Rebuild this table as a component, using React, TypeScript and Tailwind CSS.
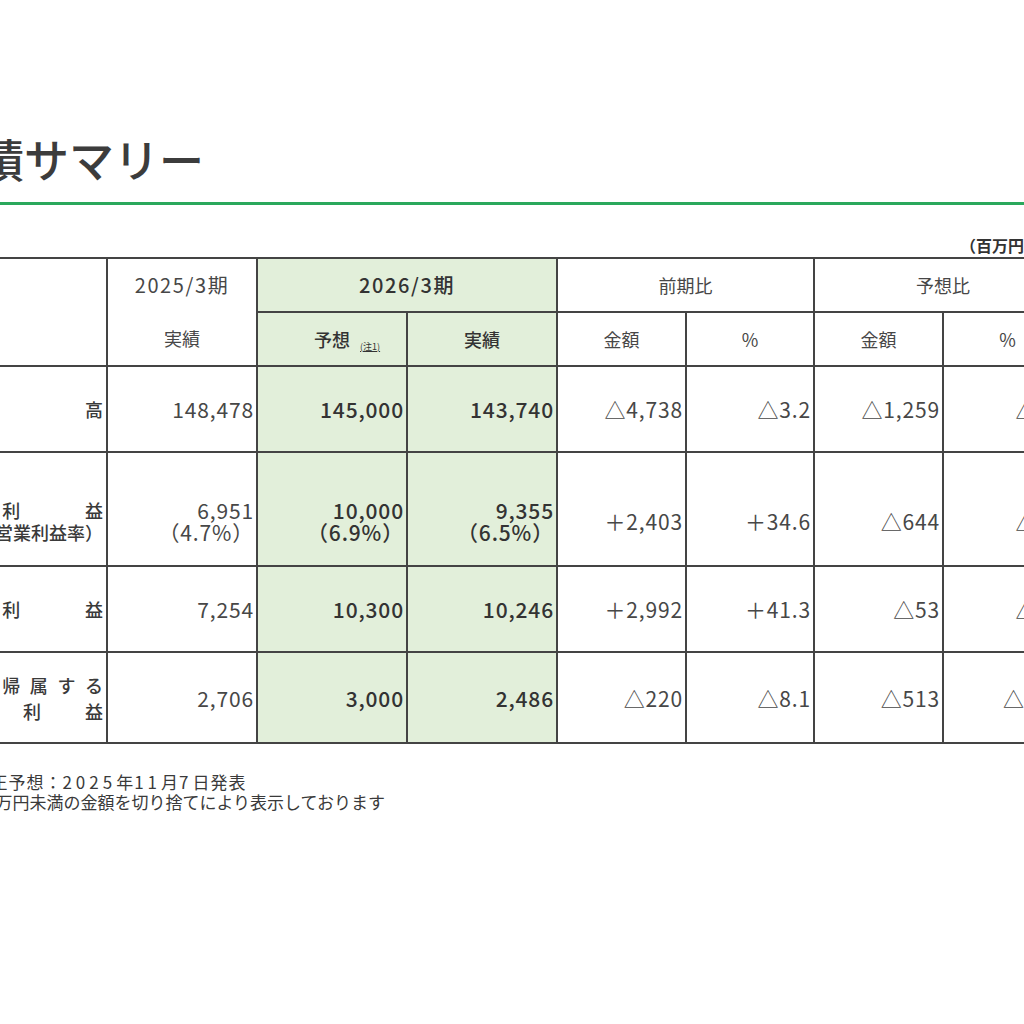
import React from 'react';

type Row = {
  label: React.ReactNode;
  values: string[][];
  height: string;
  pad?: string;
  leading: string;
};

const Spread = ({ text }: { text: string }) => (
  <div className="flex justify-between">
    {[...text].map((c, i) => (
      <span key={i}>{c}</span>
    ))}
  </div>
);

const rows: Row[] = [
  {
    label: <Spread text="売上高" />,
    values: [['148,478'], ['145,000'], ['143,740'], ['△4,738'], ['△3.2'], ['△1,259'], ['△0.9']],
    height: 'h-[86px]',
    leading: 'leading-[21px]',
  },
  {
    label: (
      <>
        <Spread text="営業利益" />
        <div className="text-right">（営業利益率）</div>
      </>
    ),
    values: [
      ['6,951', '（4.7%）'],
      ['10,000', '（6.9%）'],
      ['9,355', '（6.5%）'],
      ['＋2,403'],
      ['＋34.6'],
      ['△644'],
      ['△6.4'],
    ],
    height: 'h-[114px]',
    pad: 'pt-[24px]',
    leading: 'leading-[22px]',
  },
  {
    label: <Spread text="経常利益" />,
    values: [['7,254'], ['10,300'], ['10,246'], ['＋2,992'], ['＋41.3'], ['△53'], ['△0.5']],
    height: 'h-[86px]',
    leading: 'leading-[21px]',
  },
  {
    label: (
      <>
        <Spread text="親会社株主に帰属する" />
        <Spread text="当期純利益" />
      </>
    ),
    values: [['2,706'], ['3,000'], ['2,486'], ['△220'], ['△8.1'], ['△513'], ['△17.1']],
    height: 'h-[91px]',
    leading: 'leading-[26px]',
  },
];

const cell = 'border-2 border-[#444]';

export default function App() {
  return (
    <div className="w-[1024px] h-[1024px] overflow-hidden bg-white text-[#474747] font-['Noto_Sans_CJK_JP',sans-serif]">
      {/* Title */}
      <h1 className="ml-[-66px] mt-[136px] text-[45px] leading-none font-medium text-[#3c3c3c] whitespace-nowrap">
        業績サマリー
      </h1>
      <div className="mt-[21px] h-[3px] w-full bg-[#2aa85c]" />

      {/* Unit */}
      <div className="mt-[30px] w-[1100px] pr-[60px] flex justify-end text-[16px] leading-[20px] font-semibold text-[#333]">
        （百万円）
      </div>

      {/* Table */}
      <div className="mt-[2px] ml-[-176px] w-[1247px]">
        <table className="table-fixed border-collapse w-[1247px]">
          <colgroup>
            <col className="w-[282px]" />
            <col className="w-[150px]" />
            <col className="w-[150px]" />
            <col className="w-[150px]" />
            <col className="w-[129px]" />
            <col className="w-[128px]" />
            <col className="w-[129px]" />
            <col className="w-[129px]" />
          </colgroup>
          <thead>
            <tr className="h-[54px]">
              <th rowSpan={2} className={cell} />
              <th rowSpan={2} className={`${cell} p-0 font-normal`}>
                <div className="flex flex-col">
                  <div className="h-[52px] flex items-center justify-center text-[20px] tracking-[0.08em]">2025/3期</div>
                  <div className="h-[54px] flex items-center justify-center text-[18px]">実績</div>
                </div>
              </th>
              <th colSpan={2} className={`${cell} bg-[#e2efda] text-[20px] font-medium text-[#333] tracking-[0.08em]`}>
                2026/3期
              </th>
              <th colSpan={2} className={`${cell} text-[18px] font-normal`}>前期比</th>
              <th colSpan={2} className={`${cell} text-[18px] font-normal`}>予想比</th>
            </tr>
            <tr className="h-[54px]">
              <th className={`${cell} bg-[#e2efda] text-[18px] font-medium text-[#333]`}>
                <span className="relative">
                  予想
                  <span className="absolute left-full top-[16px] ml-[10px] text-[9px] leading-none font-normal underline whitespace-nowrap">
                    (注1)
                  </span>
                </span>
              </th>
              <th className={`${cell} bg-[#e2efda] text-[18px] font-medium text-[#333]`}>実績</th>
              <th className={`${cell} text-[18px] font-normal`}>金額</th>
              <th className={`${cell} text-[18px] font-normal`}>%</th>
              <th className={`${cell} text-[18px] font-normal`}>金額</th>
              <th className={`${cell} text-[18px] font-normal`}>%</th>
            </tr>
          </thead>
          <tbody>
            {rows.map((r, ri) => (
              <tr key={ri} className={r.height}>
                <td className={`${cell} pl-[11px] pr-[3px] align-middle text-[18px] font-medium text-[#3a3a3a] ${r.leading} ${r.pad ?? ''}`}>
                  {r.label}
                </td>
                {r.values.map((v, ci) => (
                  <td
                    key={ci}
                    className={`${cell} pr-[2px] text-right align-middle text-[21px] tracking-[0.04em] whitespace-nowrap ${r.leading} ${r.pad ?? ''} ${
                      ci === 1 || ci === 2 ? 'bg-[#e2efda] font-medium text-[#333]' : ''
                    }`}
                  >
                    {v.map((line, li) => (
                      <div key={li}>{line}</div>
                    ))}
                  </td>
                ))}
              </tr>
            ))}
          </tbody>
        </table>
      </div>

      {/* Notes */}
      <div className="mt-[28px] text-[17px] leading-[20px] text-[#3a3a3a] whitespace-nowrap">
        <div className="ml-[-92px] tracking-[1px]">
          （注1）修正予想：<span className="tracking-[4px]">2025</span>年<span className="tracking-[4px]">11</span>月<span className="tracking-[4px]">7</span>日発表
        </div>
        <div className="ml-[-82px]">（注2）百万円未満の金額を切り捨てにより表示しております</div>
      </div>
    </div>
  );
}
